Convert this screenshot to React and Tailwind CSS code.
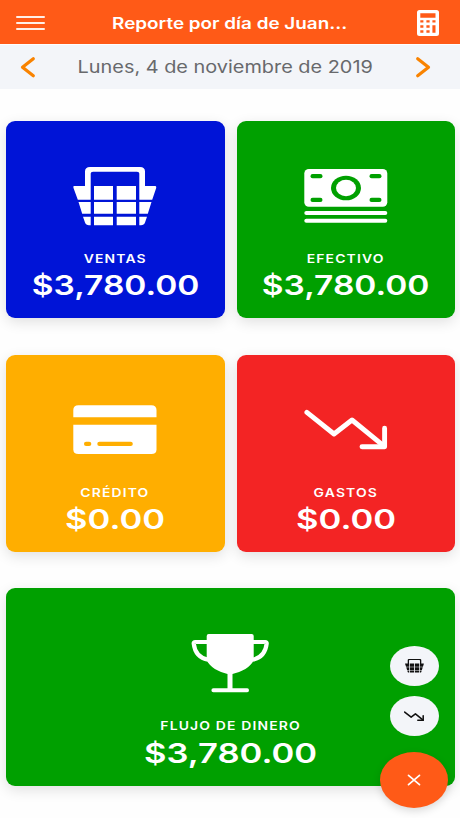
const CARDS = [
  { label: 'VENTAS', amount: '$3,780.00', color: 'bg-[#0014d7]', stretch: 'scale-x-[1.24]', icon: BasketIcon },
  { label: 'EFECTIVO', amount: '$3,780.00', color: 'bg-[#00a000]', stretch: 'scale-x-[1.24]', icon: CashIcon },
  { label: 'CRÉDITO', amount: '$0.00', color: 'bg-[#ffae00]', stretch: 'scale-x-[1.28]', icon: CardIcon },
  { label: 'GASTOS', amount: '$0.00', color: 'bg-[#f32424]', stretch: 'scale-x-[1.28]', icon: TrendIcon },
];

function BasketIcon({ className }) {
  return (
    <svg className={className} viewBox="0 0 84 60" preserveAspectRatio="none" fill="currentColor">
      <path d="M0.8 19H12V4.5Q12 0 17 0H67Q72 0 72 4.5V19H82.5Q83.6 19.5 83.2 21L79.2 32.7H66.3V6.5Q66.3 4.7 64 4.7H20Q17.7 4.7 17.7 6.5V32.7H4.8L0.5 21Q0 19.5 0.8 19Z" />
      <path d="M21 19H40V32.7H21ZM43.7 19H63V32.7H43.7Z" />
      <path d="M5.5 35H17.7V46.7H9.2ZM21 35H40V46.7H21ZM43.7 35H63V46.7H43.7ZM66.3 35H78.5L74.8 46.7H66.3Z" />
      <path d="M10 49.7H17.7V58.3H16Q13 58.3 12 55.5ZM21 49.7H40V58.3H21ZM43.7 49.7H63V58.3H43.7ZM66.3 49.7H74L72 55.5Q71 58.3 68 58.3H66.3Z" />
    </svg>
  );
}

function CashIcon({ className }) {
  return (
    <svg className={className} viewBox="0 0 84 60" fill="currentColor">
      <rect x="0.3" y="2" width="83" height="37.7" rx="4.5" />
      <g className="fill-[#00a000]">
        <rect x="6.5" y="7" width="12" height="4.3" rx="2.1" />
        <rect x="65.5" y="7" width="12" height="4.3" rx="2.1" />
        <rect x="6.5" y="30.8" width="12" height="4.3" rx="2.1" />
        <rect x="65.5" y="30.8" width="12" height="4.3" rx="2.1" />
        <ellipse cx="42" cy="21" rx="15" ry="12.3" />
      </g>
      <ellipse cx="42" cy="21" rx="10" ry="8.2" />
      <rect x="0.3" y="44" width="83" height="4" rx="2" />
      <rect x="0.3" y="51.7" width="83" height="4" rx="2" />
    </svg>
  );
}

function CardIcon({ className }) {
  return (
    <svg className={className} viewBox="0 0 84 60" fill="currentColor">
      <path d="M0.3 16.3V9Q0.3 4.3 5.5 4.3H78.3Q83.5 4.3 83.5 9V16.3Z" />
      <path d="M0.3 23.7H83.5V48.5Q83.5 53 78.3 53H5.5Q0.3 53 0.3 48.5Z" />
      <g className="fill-[#ffae00]">
        <rect x="11" y="40.7" width="7.3" height="4.3" rx="2.1" />
        <rect x="24.3" y="40.7" width="35.5" height="4.3" rx="2.1" />
      </g>
    </svg>
  );
}

function TrendIcon({ className, strokeWidth = 4.9 }) {
  return (
    <svg
      className={className}
      viewBox="0 0 84 60"
      fill="none"
      stroke="currentColor"
      strokeWidth={strokeWidth}
      strokeLinecap="round"
      strokeLinejoin="round"
    >
      <path d="M2.9 11.3L30 33L48 19L80.3 45.3" />
      <path d="M80.6 27.3V45.7H58" />
    </svg>
  );
}

function TrophyIcon({ className }) {
  return (
    <svg className={className} viewBox="0.8 0 84 60" fill="currentColor">
      <path d="M20.5 0H63.5Q65.5 0 65.5 2V26C63 33 53 38 44.3 40V54.3H59Q60.8 54.3 60.8 56.3T59 58.3H25.2Q23.2 58.3 23.2 56.3T25.2 54.3H39.3V40C31 38 21 33 18.5 26V2Q18.5 0 20.5 0Z" />
      <path
        d="M20 8H7Q5.4 8 5.5 9.5C6.5 18 10 24 20 25.7M64 8H77Q78.6 8 78.5 9.5C77.5 18 74 24 64 25.7"
        fill="none"
        stroke="currentColor"
        strokeWidth="4.2"
      />
    </svg>
  );
}

function Chevron({ d }) {
  return (
    <svg
      className="w-4 h-6"
      viewBox="0 0 16 24"
      fill="none"
      stroke="#f98300"
      strokeWidth="3.2"
      strokeLinecap="round"
      strokeLinejoin="round"
    >
      <path d={d} />
    </svg>
  );
}

function StatCard({ label, amount, color, stretch, icon: Icon, wide }) {
  return (
    <div
      className={`${color} flex flex-col items-center rounded-[9px] pt-[46px] text-white shadow-[0_4px_14px_rgba(0,0,0,0.12)] ${wide ? 'h-[198px]' : 'h-[197px]'}`}
    >
      <Icon className="w-[84px] h-[60px] shrink-0" />
      <div className="mt-6 h-4 text-xs leading-4 font-semibold tracking-[1px] whitespace-nowrap scale-x-[1.16]">
        {label}
      </div>
      <div
        className={`h-8 text-[27px] leading-8 font-semibold whitespace-nowrap ${stretch} ${wide ? 'mt-1' : 'mt-[3px]'}`}
      >
        {amount}
      </div>
    </div>
  );
}

export default function App() {
  return (
    <div className="relative w-[460px] h-[818px] overflow-hidden bg-[#fefefe] font-['Inter',sans-serif]">
      {/* Top bar */}
      <header className="flex h-11 items-center justify-between bg-[#ff5a17] pt-0.5 pl-4 pr-[21px] text-white">
        <button aria-label="Menú" className="flex w-[29px] flex-col gap-1">
          <span className="h-[2px] rounded bg-white/90" />
          <span className="h-[2px] rounded bg-white/90" />
          <span className="h-[2px] rounded bg-white/90" />
        </button>
        <h1 className="mr-[3px] text-base font-semibold whitespace-nowrap scale-x-[1.18]">Reporte por día de Juan...</h1>
        <svg className="w-[22px] h-[26px]" viewBox="0 0 22 26" fill="currentColor">
          <path
            fillRule="evenodd"
            d="M2.5 0H19.5Q22 0 22 2.5V23.5Q22 26 19.5 26H2.5Q0 26 0 23.5V2.5Q0 0 2.5 0ZM3.3 3.3V7.7H18.5V3.3ZM3.3 10.3V12.6H6.4V10.3ZM9.4 10.3V12.6H12.6V10.3ZM15.4 10.3V12.6H18.5V10.3ZM3.3 15.3V17.7H6.4V15.3ZM9.4 15.3V17.7H12.6V15.3ZM15.4 15.3V22.7H18.5V15.3ZM3.3 20.3V22.7H6.4V20.3ZM9.4 20.3V22.7H12.6V20.3Z"
          />
        </svg>
      </header>

      {/* Date picker */}
      <div className="mt-px flex h-11 items-center justify-between bg-[#f3f5f9] pl-5 pr-[29px]">
        <Chevron d="M13.3 3.8L2.5 12.3L13.3 20.8" />
        <span className="pt-0.5 text-[17px] text-[#68696c] whitespace-nowrap scale-x-[1.17]">
          Lunes, 4 de noviembre de 2019
        </span>
        <Chevron d="M2.7 3.8L13.5 12.3L2.7 20.8" />
      </div>

      {/* Totals */}
      <main className="pt-8 pl-1.5 pr-[5px]">
        <div className="grid grid-cols-2 gap-x-3 gap-y-[37px]">
          {CARDS.map((card) => (
            <StatCard key={card.label} {...card} />
          ))}
        </div>
        <div className="mt-9">
          <StatCard
            label="FLUJO DE DINERO"
            amount="$3,780.00"
            color="bg-[#00a000]"
            stretch="scale-x-[1.28]"
            icon={TrophyIcon}
            wide
          />
        </div>
      </main>

      {/* Floating actions */}
      <div className="absolute right-3 bottom-2.5 flex w-[68px] flex-col items-center">
        <button aria-label="Nueva venta" className="flex h-10 w-[49px] items-center justify-center rounded-[50%] bg-[#f3f5f9]">
          <BasketIcon className="w-[19px] h-[14px] text-[#111]" />
        </button>
        <button aria-label="Nuevo gasto" className="mt-2.5 flex h-10 w-[49px] items-center justify-center rounded-[50%] bg-[#f3f5f9]">
          <TrendIcon className="w-5 h-[15px] text-[#111]" strokeWidth={6.5} />
        </button>
        <button
          aria-label="Cerrar"
          className="mt-4 flex h-14 w-[68px] items-center justify-center rounded-[50%] bg-[#ff5a17] text-white shadow-[0_3px_8px_rgba(0,0,0,0.15)]"
        >
          <svg className="w-[14px] h-3" viewBox="0 0 14 12" fill="none" stroke="currentColor" strokeWidth="1.7" strokeLinecap="round">
            <path d="M1.5 1.3L12.5 10.7M12.5 1.3L1.5 10.7" />
          </svg>
        </button>
      </div>
    </div>
  );
}
